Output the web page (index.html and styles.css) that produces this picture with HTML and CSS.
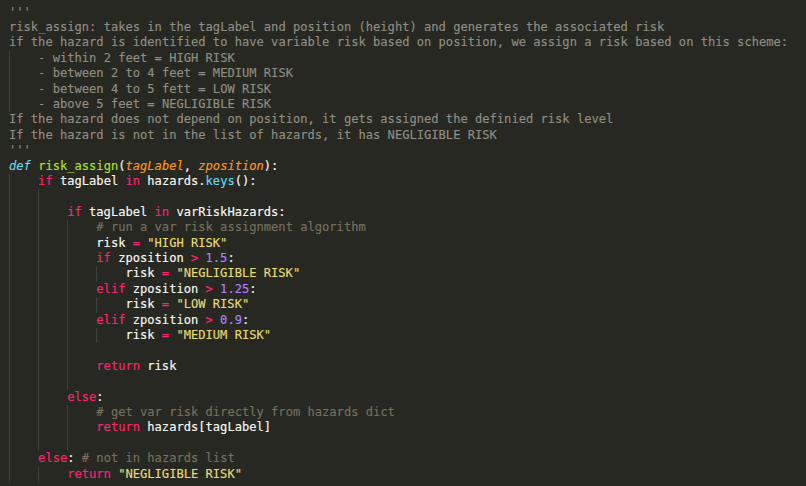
FILE: index.html
```html
<!DOCTYPE html>
<html>
<head>
<meta charset="utf-8">
<link rel="stylesheet" href="styles.css">
</head>
<body>
<div class="editor">
<div class="ln doc">'''</div>
<div class="ln doc">risk_assign: takes in the tagLabel and position (height) and generates the associated risk</div>
<div class="ln doc">if the hazard is identified to have variable risk based on position, we assign a risk based on this scheme:</div>
<div class="ln doc"><span class="g"></span>- within 2 feet = HIGH RISK</div>
<div class="ln doc"><span class="g"></span>- between 2 to 4 feet = MEDIUM RISK</div>
<div class="ln doc"><span class="g"></span>- between 4 to 5 fett = LOW RISK</div>
<div class="ln doc"><span class="g"></span>- above 5 feet = NEGLIGIBLE RISK</div>
<div class="ln doc">If the hazard does not depend on position, it gets assigned the definied risk level</div>
<div class="ln doc">If the hazard is not in the list of hazards, it has NEGLIGIBLE RISK</div>
<div class="ln doc">'''</div>
<div class="ln"><span class="d">def</span> <span class="f">risk_assign</span>(<span class="p">tagLabel</span>, <span class="p">zposition</span>):</div>
<div class="ln"><span class="g"></span><span class="k">if</span> tagLabel <span class="k">in</span> hazards.<span class="b">keys</span>():</div>
<div class="ln"><span class="g"></span><span class="g"></span></div>
<div class="ln"><span class="g"></span><span class="g"></span><span class="k">if</span> tagLabel <span class="k">in</span> varRiskHazards:</div>
<div class="ln"><span class="g"></span><span class="g"></span><span class="g"></span><span class="c"># run a var risk assignment algorithm</span></div>
<div class="ln"><span class="g"></span><span class="g"></span><span class="g"></span>risk <span class="k">=</span> <span class="s">"HIGH RISK"</span></div>
<div class="ln"><span class="g"></span><span class="g"></span><span class="g"></span><span class="k">if</span> zposition <span class="k">&gt;</span> <span class="n">1.5</span>:</div>
<div class="ln"><span class="g"></span><span class="g"></span><span class="g"></span><span class="g"></span>risk <span class="k">=</span> <span class="s">"NEGLIGIBLE RISK"</span></div>
<div class="ln"><span class="g"></span><span class="g"></span><span class="g"></span><span class="k">elif</span> zposition <span class="k">&gt;</span> <span class="n">1.25</span>:</div>
<div class="ln"><span class="g"></span><span class="g"></span><span class="g"></span><span class="g"></span>risk <span class="k">=</span> <span class="s">"LOW RISK"</span></div>
<div class="ln"><span class="g"></span><span class="g"></span><span class="g"></span><span class="k">elif</span> zposition <span class="k">&gt;</span> <span class="n">0.9</span>:</div>
<div class="ln"><span class="g"></span><span class="g"></span><span class="g"></span><span class="g"></span>risk <span class="k">=</span> <span class="s">"MEDIUM RISK"</span></div>
<div class="ln"><span class="g"></span><span class="g"></span><span class="g"></span></div>
<div class="ln"><span class="g"></span><span class="g"></span><span class="g"></span><span class="k">return</span> risk</div>
<div class="ln"><span class="g"></span><span class="g"></span><span class="g"></span></div>
<div class="ln"><span class="g"></span><span class="g"></span><span class="k">else</span>:</div>
<div class="ln"><span class="g"></span><span class="g"></span><span class="g"></span><span class="c"># get var risk directly from hazards dict</span></div>
<div class="ln"><span class="g"></span><span class="g"></span><span class="g"></span><span class="k">return</span> hazards[tagLabel]</div>
<div class="ln"><span class="g"></span><span class="g"></span><span class="g"></span></div>
<div class="ln"><span class="g"></span><span class="k">else</span>: <span class="c"># not in hazards list</span></div>
<div class="ln"><span class="g"></span><span class="g"></span><span class="k">return</span> <span class="s">"NEGLIGIBLE RISK"</span></div>
</div>
</body>
</html>
```

FILE: styles.css
```css
html, body {
  margin: 0;
  padding: 0;
  background: #272822;
  height: 100%;
  overflow: hidden;
}

.editor {
  padding: 4.5px 0 0 9px;
  font-family: "DejaVu Sans Mono", "Liberation Mono", monospace;
  font-size: 12.1px;
  color: #f8f8f2;
  -webkit-text-stroke: 0.15px currentColor;
}

.ln {
  height: 15.42px;
  line-height: 15.42px;
  white-space: pre;
}

.g {
  display: inline-block;
  box-sizing: border-box;
  width: 4ch;
  height: 15.42px;
  vertical-align: top;
  border-left: 1px solid #3e3f38;
}

.doc { color: #8f8e82; }
.c { color: #75715e; }
.k { color: #f92672; }
.d { color: #66d9ef; font-style: italic; }
.f { color: #a6e22e; }
.p { color: #fd971f; font-style: italic; }
.b { color: #66d9ef; }
.s { color: #e6db74; }
.n { color: #ae81ff; }
```
